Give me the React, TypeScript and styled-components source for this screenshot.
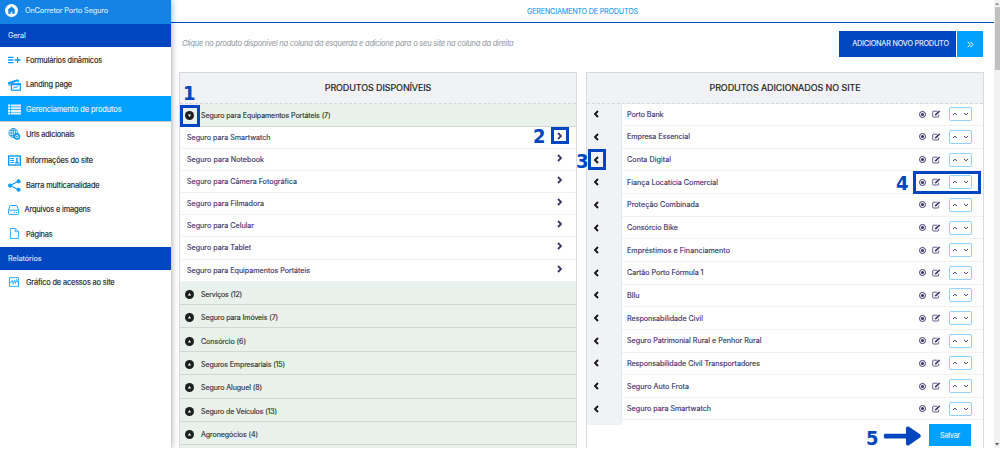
import React from 'react';
import styled, { createGlobalStyle, css } from 'styled-components';

const GlobalStyle = createGlobalStyle`
  * {
    box-sizing: border-box;
  }

  body {
    margin: 0;
    background: #fff;
    overflow: hidden;
    font-family: Inter, 'Liberation Sans', sans-serif;
  }
`;

const Canvas = styled.div`
  position: relative;
  width: 1000px;
  height: 450px;
`;

const Page = styled.div`
  display: flex;
  height: 448px;
  overflow: hidden;
`;

const Sidebar = styled.nav`
  position: relative;
  z-index: 1;
  flex: 0 0 171px;
  background: #fff;
  box-shadow: 0 0 7px rgba(0, 0, 0, 0.4);
`;

const Brand = styled.div`
  display: flex;
  align-items: center;
  height: 24px;
  padding: 0 0 3px 5px;
  gap: 7px;
  background: #1583e5;
  color: #d8ebff;
  font-size: 7.3px;
  -webkit-text-stroke: 0.1px currentColor;
`;

const SectionTitle = styled.div<{ $height: number }>`
  display: flex;
  align-items: center;
  height: ${({ $height }) => $height}px;
  padding-left: 8px;
  background: #0046c0;
  color: #dbe7fb;
  font-size: 7.3px;
  -webkit-text-stroke: 0.1px currentColor;
`;

const MenuItem = styled.a<{ $height: number; $active?: boolean; $gap?: number }>`
  display: flex;
  align-items: center;
  height: ${({ $height }) => $height}px;
  padding-top: 1px;
  padding-left: 8px;
  gap: ${({ $gap }) => $gap ?? 5}px;
  color: #222;
  font-size: 7.4px;
  -webkit-text-stroke: 0.15px currentColor;

  svg {
    flex: none;
    color: #0a9cfb;
  }

  ${({ $active }) =>
    $active &&
    css`
      background: #00a0ff;
      color: #e2f4ff;
      box-shadow: 0 1px 1px rgba(0, 0, 0, 0.2);

      svg {
        color: #e2f4ff;
      }
    `}
`;

const Main = styled.main`
  flex: 1;
  min-width: 0;
`;

const TopBar = styled.header`
  display: flex;
  align-items: center;
  justify-content: center;
  height: 23px;
  border-bottom: 1px solid #0046c0;
  color: #179df5;
  font-size: 7.2px;
  -webkit-text-stroke: 0.1px currentColor;
`;

const Toolbar = styled.div`
  display: flex;
  align-items: flex-start;
  justify-content: space-between;
  height: 49px;
  padding: 8px 11px 0 11px;
`;

const Hint = styled.p`
  margin: 8px 0 0;
  color: #9a9fa8;
  font-size: 7.5px;
  line-height: 10px;
  font-style: italic;
  -webkit-text-stroke: 0.1px currentColor;
`;

const AddButton = styled.button`
  display: flex;
  height: 26px;
  padding: 0;
  border: 0;
  background: none;
  color: #e8f0ff;
  font-family: inherit;
  font-size: 7.3px;
  -webkit-text-stroke: 0.1px currentColor;
`;

const AddLabel = styled.span`
  display: flex;
  align-items: center;
  justify-content: center;
  width: 117px;
  padding-left: 6px;
  padding-bottom: 1px;
  background: #0046c0;
`;

const AddIcon = styled.span`
  display: flex;
  align-items: center;
  justify-content: center;
  width: 26px;
  margin-left: 1px;
  background: #00a0ff;
`;

const Columns = styled.div`
  display: grid;
  grid-template-columns: 398px 398px;
  column-gap: 9px;
  padding-left: 8px;
`;

const Panel = styled.section`
  height: 380px;
  border: 1px solid #d8dadd;
  border-bottom: 0;
`;

const PanelTitle = styled.h2`
  display: flex;
  align-items: center;
  justify-content: center;
  height: 30.5px;
  margin: 0;
  border-bottom: 1px dashed #d4d6da;
  background: #f1f2f5;
  color: #222;
  font-size: 9px;
  font-weight: 400;
  -webkit-text-stroke: 0.2px currentColor;
`;

const Category = styled.div<{ $height: number; $top?: number }>`
  display: flex;
  align-items: center;
  height: ${({ $height }) => $height}px;
  padding-top: ${({ $top }) => $top ?? 0}px;
  padding-left: 5px;
  gap: 7px;
  border-bottom: 1px solid #d3d8d6;
  background: #e9f1ec;
  color: #333;
  font-size: 7.1px;
  -webkit-text-stroke: 0.15px currentColor;
`;

const Available = styled.div`
  display: flex;
  align-items: center;
  justify-content: space-between;
  height: 22.15px;
  padding: 0 13px 0 7px;
  border-bottom: 1px solid #f1f1f3;
  color: #3c3569;
  font-size: 7.2px;
  -webkit-text-stroke: 0.15px currentColor;

  svg {
    margin-bottom: 3px;
  }
`;

const Added = styled.div`
  display: flex;
  align-items: stretch;
  height: 22.65px;
  color: #3c3569;
  font-size: 7.2px;
  -webkit-text-stroke: 0.15px currentColor;
`;

const RemoveCell = styled.div`
  display: flex;
  align-items: center;
  width: 35px;
  padding: 0 0 1px 6px;
  border-right: 1px solid #e8e9eb;
  background: #f1f2f5;
  color: #111;
`;

const AddedBody = styled.div`
  display: flex;
  flex: 1;
  align-items: center;
  padding: 0 11px 0 5px;
  border-bottom: 1px solid #f1f1f3;
`;

const AddedName = styled.span`
  flex: 1;
`;

const Actions = styled.div`
  display: flex;
  align-items: center;
  gap: 6px;
`;

const OrderBox = styled.div`
  display: flex;
  align-items: center;
  justify-content: space-between;
  width: 23px;
  height: 14px;
  margin-left: 2px;
  padding: 0 2px;
  border: 1px solid #8fd3fb;
  border-radius: 2px;
`;

const SaveRow = styled.div`
  display: flex;
  justify-content: space-between;
  height: 27px;
  padding-right: 12px;
`;

const SaveGutter = styled.div`
  width: 35px;
  height: 4.5px;
  background: #f1f2f5;
`;

const SaveButton = styled.button`
  width: 42px;
  height: 22px;
  margin-top: 4px;
  padding: 0;
  border: 0;
  background: #00a0ff;
  color: #e2f4ff;
  font-family: inherit;
  font-size: 7.4px;
  -webkit-text-stroke: 0.1px currentColor;
`;

const ScrollTrack = styled.div`
  display: flex;
  flex: 0 0 6px;
  flex-direction: column;
  align-items: center;
  padding: 2px 0;
  background: #f1f1f1;
`;

const ScrollThumb = styled.div`
  width: 5px;
  height: 63px;
  margin: 2px 0 auto 1px;
  background: #c1c1c1;
`;

const Marker = styled.span<{ $x: number; $y: number }>`
  position: absolute;
  z-index: 2;
  left: ${({ $x }) => $x}px;
  top: ${({ $y }) => $y}px;
  color: #0046c0;
  font-family: 'DejaVu Sans Condensed', 'DejaVu Sans', sans-serif;
  font-size: 20px;
  font-stretch: condensed;
  font-weight: 700;
  line-height: 20px;
`;

const Highlight = styled.div<{ $x: number; $y: number; $w: number; $h: number }>`
  position: absolute;
  z-index: 2;
  left: ${({ $x }) => $x}px;
  top: ${({ $y }) => $y}px;
  width: ${({ $w }) => $w}px;
  height: ${({ $h }) => $h}px;
  border: 3px solid #0046c0;
`;

const Arrow = styled.svg`
  position: absolute;
  z-index: 2;
  left: 883px;
  top: 425px;
`;

// keeps each label at its measured width whatever the font metrics are
const Label = ({ text, width }: { text: string; width?: number }) => {
  const ref = React.useRef<HTMLSpanElement>(null);

  React.useLayoutEffect(() => {
    const el = ref.current;
    if (!el || !width) return;
    el.style.letterSpacing = '0px';
    const natural = el.getBoundingClientRect().width;
    el.style.letterSpacing = `${(width - natural) / text.length}px`;
  }, [text, width]);

  return <span ref={ref} style={{ whiteSpace: 'nowrap' }}>{text}</span>;
};

const Chevron = ({ dir }: { dir: 'left' | 'right' }) => (
  <svg width="6" height="8" viewBox="0 0 6 8" fill="none" stroke="currentColor" strokeWidth="1.8">
    <path d={dir === 'left' ? 'M5 1 2 4l3 3' : 'M1 1l3 3-3 3'} />
  </svg>
);

const Caret = ({ up }: { up?: boolean }) => (
  <svg width="6" height="4" viewBox="0 0 6 4" fill="none" stroke="#4b4476" strokeWidth="1">
    <path d={up ? 'M1 3 3 1.2 5 3' : 'M1 1 3 2.8 5 1'} />
  </svg>
);

const Toggle = ({ open }: { open?: boolean }) => (
  <svg width="9" height="9" viewBox="0 0 9 9">
    <circle cx="4.5" cy="4.5" r="4.5" fill="#1d1f1e" />
    <path d={open ? 'M2.9 3.6h3.2L4.5 5.9z' : 'M2.9 5.4h3.2L4.5 3.1z'} fill="#fff" />
  </svg>
);

const TargetIcon = () => (
  <svg width="7" height="7" viewBox="0 0 7 7" fill="none" stroke="#3c3569">
    <circle cx="3.5" cy="3.5" r="3" strokeWidth="1" />
    <circle cx="3.5" cy="3.5" r="1.6" fill="#3c3569" stroke="none" />
  </svg>
);

const EditIcon = () => (
  <svg width="9" height="8" viewBox="0 0 9 8" fill="none" stroke="#3c3569">
    <path d="M5.4 1.2H1.4Q.7 1.2.7 1.9v4.4q0 .7.7.7h4.6q.7 0 .7-.7V4.6" strokeWidth="0.8" />
    <path d="M3.2 5.2 7.7 1" strokeWidth="1.6" />
  </svg>
);

const icons: Record<string, React.ReactNode> = {
  form: (
    <svg width="13" height="12" viewBox="0 0 13 12" stroke="currentColor" strokeWidth="1.3" fill="none">
      <path d="M0 3.3h5.5M0 6h5.5M0 8.7h5.5M6.6 6h6M9.6 3v6" />
    </svg>
  ),
  landing: (
    <svg width="13" height="12" viewBox="0 0 13 12" fill="none" stroke="currentColor">
      <path d="M.3 4.2 9.8 1.2" strokeWidth="2" />
      <path d="M1 4v2h2M10.2.8v2.4" strokeWidth="1.1" />
      <rect x="3.4" y="4.8" width="8.9" height="6.4" strokeWidth="1.2" />
      <path d="M3 5.4h9.6" strokeWidth="1.8" />
      <path d="m4.8 9.6 2-1.8 1.2 1 2.2-2" />
    </svg>
  ),
  list: (
    <svg width="13" height="11" viewBox="0 0 13 11" fill="currentColor">
      <path d="M0 .5h2.3v2H0zM3 .5h10v2H3zM0 3.2h2.3v2H0zM3 3.2h10v2H3zM0 5.9h2.3v2H0zM3 5.9h10v2H3zM0 8.6h2.3v2H0zM3 8.6h10v2H3z" />
    </svg>
  ),
  globe: (
    <svg width="13" height="13" viewBox="0 0 13 13" fill="none" stroke="currentColor" strokeWidth="0.8">
      <circle cx="5.4" cy="5" r="4.5" />
      <ellipse cx="5.4" cy="5" rx="2.2" ry="4.5" />
      <path d="M1 5h9M5.4.5v9M1.8 2.6h7.2M1.8 7.4h5" />
      <circle cx="9" cy="8.6" r="2.5" fill="#fff" strokeWidth="1.6" />
      <circle cx="9" cy="8.6" r=".6" fill="currentColor" />
    </svg>
  ),
  info: (
    <svg width="13" height="11" viewBox="0 0 13 11" fill="none" stroke="currentColor">
      <rect x=".7" y="1" width="11.6" height="9" strokeWidth="1.4" />
      <path d="M2.3 3.6H6M2.3 5.5H6M2.3 7.4H6" />
      <circle cx="9" cy="3.8" r="1" fill="currentColor" stroke="none" />
      <path d="M9 4.5v3M7.2 7.8h3.6" strokeWidth="1.4" />
    </svg>
  ),
  share: (
    <svg width="13" height="13" viewBox="0 0 13 13" fill="currentColor" stroke="currentColor">
      <path d="M10.5 2.3 2 6.5l8.5 4.3" fill="none" strokeWidth="1.1" />
      <circle cx="2" cy="6.5" r="1.6" />
      <circle cx="10.6" cy="2.3" r="1.6" />
      <circle cx="10.6" cy="10.7" r="1.6" />
    </svg>
  ),
  drive: (
    <svg width="11" height="10" viewBox="0 0 11 10" fill="none" stroke="currentColor" strokeWidth="0.9">
      <path d="M.5 5.2 2 .9Q2.2.5 2.6.5h5.8q.4 0 .6.4l1.5 4.3" />
      <rect x=".5" y="5.2" width="10" height="4.2" rx="0.8" />
      <path d="M6 7.5h1M8 7.5h1" />
    </svg>
  ),
  page: (
    <svg width="13" height="12" viewBox="0 0 13 12" fill="none" stroke="currentColor" strokeWidth="0.8">
      <path d="M2.4.5h5l3 3v7h-8zM7.2.5v3.2h3.2" />
    </svg>
  ),
  chart: (
    <svg width="13" height="11" viewBox="0 0 13 11" fill="none" stroke="currentColor" strokeWidth="0.8">
      <rect x="1.6" y=".7" width="9" height="8.6" />
      <path d="M2 5.3h1l1.2-2 1 3.6 1.3-3.6 1 3 1-4 1 3h1" />
    </svg>
  ),
};

const menu = [
  { icon: 'form', text: 'Formulários dinâmicos', width: 76, height: 25 },
  { icon: 'landing', text: 'Landing page', width: 46, height: 24 },
  { icon: 'list', text: 'Gerenciamento de produtos', width: 95.5, height: 25, active: true },
  { icon: 'globe', text: 'Urls adicionais', width: 48.5, height: 26 },
  { icon: 'info', text: 'Informações do site', width: 67, height: 25 },
  { icon: 'share', text: 'Barra multicanalidade', width: 73.5, height: 25 },
  { icon: 'drive', text: 'Arquivos e imagens', width: 66, height: 24 },
  { icon: 'page', text: 'Páginas', width: 26.5, height: 25.5 },
];

const available = [
  { text: 'Seguro para Smartwatch', width: 83.5 },
  { text: 'Seguro para Notebook', width: 77 },
  { text: 'Seguro para Câmera Fotográfica', width: 110 },
  { text: 'Seguro para Filmadora', width: 77 },
  { text: 'Seguro para Celular', width: 67 },
  { text: 'Seguro para Tablet', width: 64 },
  { text: 'Seguro para Equipamentos Portáteis', width: 123 },
];

const categories = [
  { text: 'Serviços (12)', width: 41 },
  { text: 'Seguro para Imóveis (7)', width: 77 },
  { text: 'Consórcio (6)', width: 45 },
  { text: 'Seguros Empresariais (15)', width: 84 },
  { text: 'Seguro Aluguel (8)', width: 61 },
  { text: 'Seguro de Veículos (13)', width: 76 },
  { text: 'Agronegócios (4)', width: 57 },
  { text: '', width: 0 },
];

const added = [
  { text: 'Porto Bank', width: 36.5 },
  { text: 'Empresa Essencial', width: 63 },
  { text: 'Conta Digital', width: 44 },
  { text: 'Fiança Locatícia Comercial', width: 91 },
  { text: 'Proteção Combinada', width: 72 },
  { text: 'Consórcio Bike', width: 51 },
  { text: 'Empréstimos e Financiamento', width: 103 },
  { text: 'Cartão Porto Fórmula 1', width: 76.5 },
  { text: 'Bllu', width: 12.5 },
  { text: 'Responsabilidade Civil', width: 76 },
  { text: 'Seguro Patrimonial Rural e Penhor Rural', width: 134.5 },
  { text: 'Responsabilidade Civil Transportadores', width: 133 },
  { text: 'Seguro Auto Frota', width: 62 },
  { text: 'Seguro para Smartwatch', width: 84 },
];

const App: React.FC = () => {
  return (
    <Canvas>
      <GlobalStyle />
      <Page>
        <Sidebar>
          <Brand>
            <svg width="13" height="13" viewBox="0 0 13 13">
              <circle cx="6.5" cy="6.5" r="6.5" fill="#fff" />
              <path d="M6.5 2.8 10.2 6H9.4v3.5H7.3V7.3H5.7v2.2H3.6V6h-.8z" fill="#1583e5" stroke="#1583e5" strokeWidth="0.5" />
            </svg>
            <Label text="OnCorretor Porto Seguro" width={83} />
          </Brand>
          <SectionTitle $height={23}>
            <Label text="Geral" width={17.5} />
          </SectionTitle>
          {menu.map((item) => (
            <MenuItem
              key={item.text}
              $height={item.height}
              $active={item.active}
              $gap={item.icon === 'drive' ? 5.5 : 5}
            >
              {icons[item.icon]}
              <Label text={item.text} width={item.width} />
            </MenuItem>
          ))}
          <SectionTitle $height={23}>
            <Label text="Relatórios" width={33.5} />
          </SectionTitle>
          <MenuItem $height={25}>
            {icons.chart}
            <Label text="Gráfico de acessos ao site" width={88.5} />
          </MenuItem>
        </Sidebar>

        <Main>
          <TopBar>
            <Label text="GERENCIAMENTO DE PRODUTOS" width={111} />
          </TopBar>
          <Toolbar>
            <Hint>
              <Label
                text="Clique no produto disponível na coluna da esquerda e adicione para o seu site na coluna da direita"
                width={331.5}
              />
            </Hint>
            <AddButton>
              <AddLabel>
                <Label text="ADICIONAR NOVO PRODUTO" width={96.5} />
              </AddLabel>
              <AddIcon>
                <svg width="7" height="7" viewBox="0 0 7 7" fill="none" stroke="#fff" strokeWidth="1">
                  <path d="M.7.8 3.2 3.5.7 6.2M3.5.8 6 3.5 3.5 6.2" />
                </svg>
              </AddIcon>
            </AddButton>
          </Toolbar>
          <Columns>
            <Panel>
              <PanelTitle>
                <Label text="PRODUTOS DISPONÍVEIS" width={106.5} />
              </PanelTitle>
              <Category $height={23.2} $top={1}>
                <Toggle open />
                <Label text="Seguro para Equipamentos Portáteis (7)" width={129.5} />
              </Category>
              {available.map((item) => (
                <Available key={item.text}>
                  <Label text={item.text} width={item.width} />
                  <Chevron dir="right" />
                </Available>
              ))}
              {categories.map((item) => (
                <Category key={item.text} $height={23.4} $top={3}>
                  <Toggle />
                  <Label text={item.text} width={item.width} />
                </Category>
              ))}
            </Panel>
            <Panel>
              <PanelTitle>
                <Label text="PRODUTOS ADICIONADOS NO SITE" width={151} />
              </PanelTitle>
              {added.map((item) => (
                <Added key={item.text}>
                  <RemoveCell>
                    <Chevron dir="left" />
                  </RemoveCell>
                  <AddedBody>
                    <AddedName>
                      <Label text={item.text} width={item.width} />
                    </AddedName>
                    <Actions>
                      <TargetIcon />
                      <EditIcon />
                      <OrderBox>
                        <Caret up />
                        <Caret />
                      </OrderBox>
                    </Actions>
                  </AddedBody>
                </Added>
              ))}
              <SaveRow>
                <SaveGutter />
                <SaveButton>
                  <Label text="Salvar" width={20} />
                </SaveButton>
              </SaveRow>
            </Panel>
          </Columns>
        </Main>

        <ScrollTrack>
          <svg width="4" height="3" viewBox="0 0 4 3">
            <path d="M0 3h4L2 .5z" fill="#8a8a8a" />
          </svg>
          <ScrollThumb />
          <svg width="4" height="3" viewBox="0 0 4 3">
            <path d="M0 0h4L2 2.5z" fill="#505050" />
          </svg>
        </ScrollTrack>
      </Page>

      <Marker $x={183} $y={83}>1</Marker>
      <Highlight $x={180} $y={105} $w={20} $h={22} />
      <Marker $x={533} $y={126}>2</Marker>
      <Highlight $x={551} $y={127} $w={18} $h={17} />
      <Marker $x={576} $y={151}>3</Marker>
      <Highlight $x={588} $y={149} $w={18} $h={21} />
      <Marker $x={896} $y={173}>4</Marker>
      <Highlight $x={913} $y={171} $w={68} $h={23} />
      <Marker $x={866} $y={428}>5</Marker>
      <Arrow width="38" height="22" viewBox="0 0 38 22" fill="#0046c0">
        <path d="M1.5 8.7h21.5V3.5q0-3 3-1.7l11 7.5q1.5 1.7 0 3.3l-11 7.6q-3 1.3-3-1.7V13.4H1.5q-1.5-2.3 0-4.7z" />
      </Arrow>
    </Canvas>
  );
};

export default App;
